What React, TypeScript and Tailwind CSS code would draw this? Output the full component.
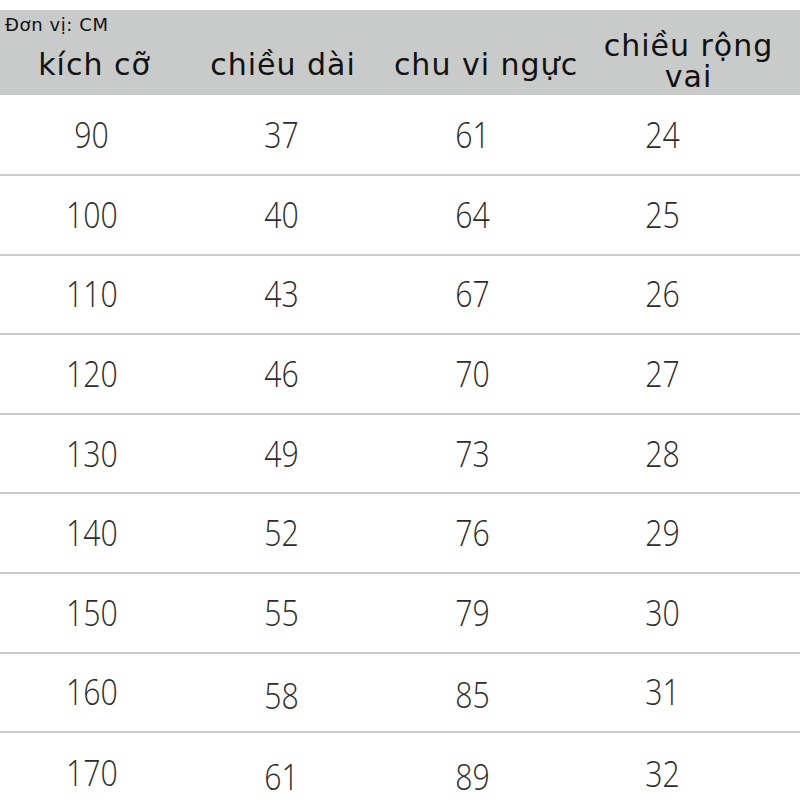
const rows = [
  ["90", "37", "61", "24"],
  ["100", "40", "64", "25"],
  ["110", "43", "67", "26"],
  ["120", "46", "70", "27"],
  ["130", "49", "73", "28"],
  ["140", "52", "76", "29"],
  ["150", "55", "79", "30"],
  ["160", "58", "85", "31"],
  ["170", "61", "89", "32"],
];

// the source image has a few numbers sitting a little lower in the last rows
const nudges: Record<string, string> = {
  "7-1": "translate-y-[4px]",
  "7-2": "translate-y-[3px]",
  "8-1": "translate-y-[4px]",
  "8-2": "translate-y-[4px]",
  "8-3": "translate-y-[1px]",
};

const headFont = { fontFamily: '"DejaVu Sans", sans-serif' };
const numFont = { fontFamily: '"Open Sans", sans-serif' };

function SizeRow({ cells, row, last }: { cells: string[]; row: number; last: boolean }) {
  return (
    <div
      className={`grid grid-cols-[184px_196px_186px_194px] items-center ${
        row === 0 ? "h-[81px]" : "h-[79.6px]"
      } ${last ? "" : "border-b-2 border-[#cbcbcb]"}`}
    >
      {cells.map((c, i) => (
        <div key={i} className="flex justify-center">
          <span
            className={`text-[36px] font-light leading-none text-[#2c2c2c] scale-x-[0.84] ${
              nudges[`${row}-${i}`] ?? ""
            }`}
            style={numFont}
          >
            {c}
          </span>
        </div>
      ))}
    </div>
  );
}

export default function App() {
  return (
    <div className="w-[800px] h-[800px] overflow-hidden bg-white">
      <div className="h-[10px]" />
      <div className="h-[85px] bg-[#c9caca] text-[#111]" style={headFont}>
        <div className="h-[19px] pt-[6px] pl-[5px] text-[18px] leading-[18px] tracking-[0.6px]">
          Đơn vị: CM
        </div>
        <div className="grid grid-cols-[189px_188px_218px_187px] items-start text-[30px] leading-[31px] tracking-[1px]">
          <div className="mt-[20px] text-center">kích cỡ</div>
          <div className="mt-[20px] text-center">chiều dài</div>
          <div className="mt-[20px] text-center">chu vi ngực</div>
          <div className="mt-[1px] text-center">
            chiều rộng
            <br />
            vai
          </div>
        </div>
      </div>
      {rows.map((r, i) => (
        <SizeRow key={i} cells={r} row={i} last={i === rows.length - 1} />
      ))}
    </div>
  );
}
